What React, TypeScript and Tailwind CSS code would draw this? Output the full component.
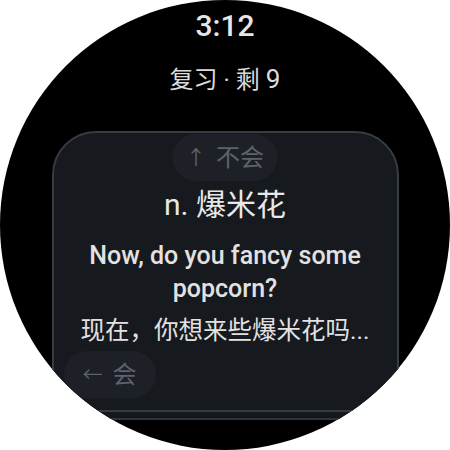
export default function App() {
  return (
    <div
      className="relative w-[450px] h-[450px] overflow-hidden rounded-full bg-black flex flex-col items-center"
      style={{ fontFamily: 'Roboto, "Noto Sans CJK SC", sans-serif' }}
    >
      {/* Clock */}
      <div className="pt-[8px] text-[30px] leading-[36px] font-medium text-[#e6e6e6]">3:12</div>

      {/* Session title */}
      <div className="mt-[20px] text-[24px] leading-[30px] text-[#dcdcdc]">
        复习 · 剩 <span className="text-[26px]">9</span>
      </div>

      {/* Card deck */}
      <div className="relative mt-[36px] w-[347px] h-[281px]">
        <div className="absolute inset-0 translate-y-[8px] rounded-[44px] border-2 border-[#2f333a] bg-[#14171b]" />

        <div className="relative h-full rounded-[44px] border-2 border-[#373c44] bg-[#16191e] flex flex-col items-center pt-[54px] px-4">
          {/* Swipe hint: up */}
          <div className="absolute top-[1px] left-1/2 -translate-x-1/2 w-[105px] h-[47px] rounded-full bg-[#1d2027] flex items-center justify-center gap-[10px] text-[24px] text-[#5d636b]">
            <span className="text-[20px]">↑</span>
            <span>不会</span>
          </div>

          <div className="text-[30px] leading-[36px] text-[#e8e8e8]">n. 爆米花</div>

          <div className="mt-[16px] text-center text-[25px] leading-[33px] font-medium text-[#e2e2e2]">
            Now, do you fancy some
            <br />
            popcorn?
          </div>

          <div className="mt-[9px] text-center text-[24.5px] leading-[33px] text-[#e2e2e2] whitespace-nowrap">
            现在，你想来些爆米花吗...
          </div>

          {/* Swipe hint: left */}
          <div className="absolute top-[218px] left-[10px] w-[92px] h-[47px] rounded-full bg-[#1d2027] flex items-center justify-center gap-[10px] text-[24px] text-[#5d636b]">
            <span className="text-[20px]">←</span>
            <span>会</span>
          </div>
        </div>
      </div>
    </div>
  );
}
